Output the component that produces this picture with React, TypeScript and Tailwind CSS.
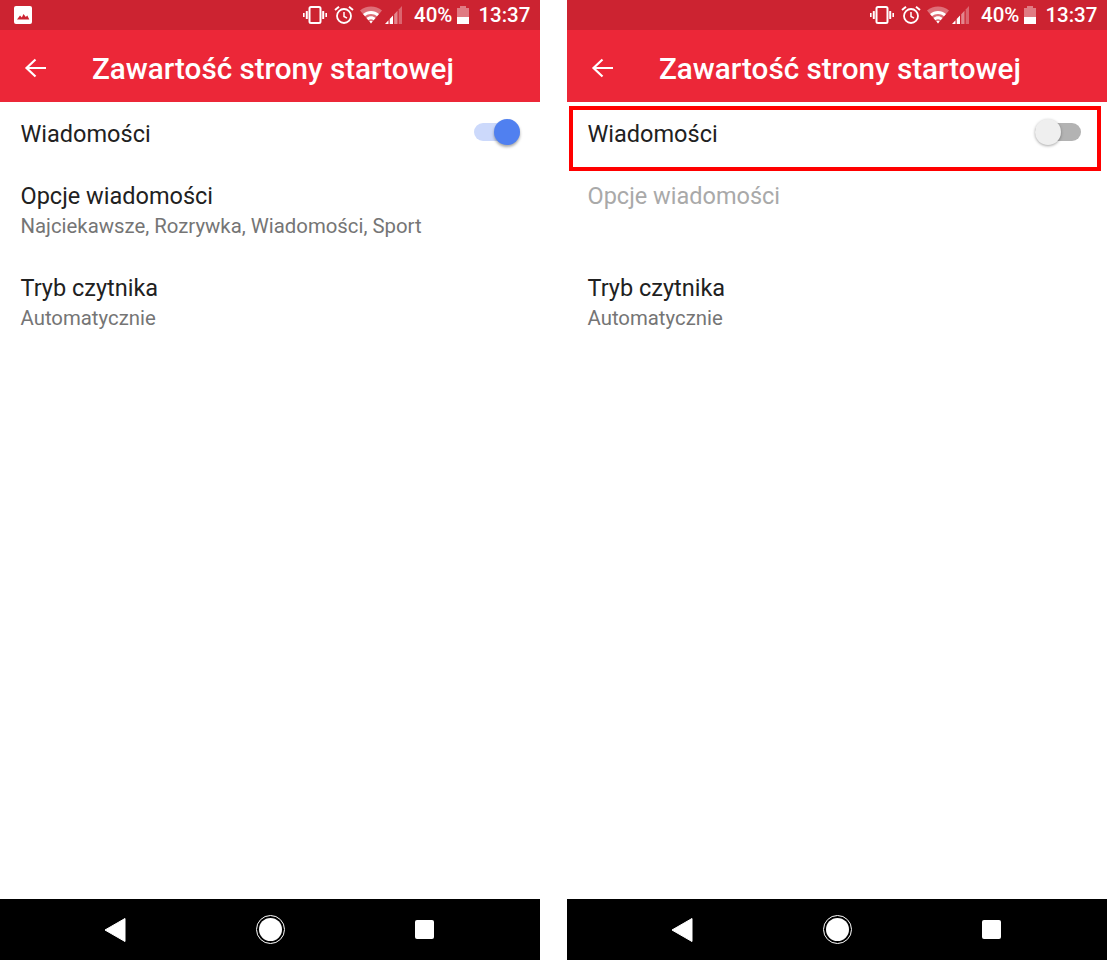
import React from "react";

function StatusIcons() {
  return (
    <div className="flex items-center h-full">
      <svg width="24" height="20" viewBox="0 0 24 20" className="ml-[303px]">
        <rect x="6.5" y="2" width="11" height="16" rx="1.5" fill="none" stroke="#fff" strokeWidth="2" />
        <rect x="2.8" y="6" width="2" height="8" rx="0.5" fill="#fff" />
        <rect x="19.2" y="6" width="2" height="8" rx="0.5" fill="#fff" />
        <rect x="0" y="8" width="1.6" height="4" fill="#fff" />
        <rect x="22.4" y="8" width="1.6" height="4" fill="#fff" />
      </svg>
      <svg width="20" height="20" viewBox="0 0 20 20" className="ml-[7px]">
        <circle cx="10" cy="11" r="7" fill="none" stroke="#fff" strokeWidth="1.8" />
        <path d="M10 7v4.5l3 1.7" fill="none" stroke="#fff" strokeWidth="1.5" />
        <path d="M1 5l4-3.2M19 5l-4-3.2" stroke="#fff" strokeWidth="2" />
      </svg>
      <svg width="22" height="18" viewBox="0 0 22 18" className="ml-[6px]">
        <path d="M0 4.5C6-1 16-1 22 4.5L11 17.5Z" fill="#fff" fillOpacity="0.35" />
        <path d="M3 8C7.5 4 14.5 4 19 8l-2 2.2C13.5 7.2 8.5 7.2 5 10.2Z" fill="#fff" />
        <path d="M6.5 12c2.6-2.2 6.400-2.200 9 0l-1.900 2.200c-1.500-1.200-3.700-1.200-5.200 0Z" fill="#fff" />
        <path d="M9.400 15.200c1-.7 2.200-.7 3.200 0L11 17.500Z" fill="#fff" />
      </svg>
      <svg width="18" height="18" viewBox="0 0 18 18" className="ml-[3px]">
        <path d="M0 18L3.500 14.300V18Z" fill="#fff" />
        <path d="M4.700 13V18H8V9.600Z" fill="#fff" />
        <path d="M9.200 8.300V18H12.500V4.800Z" fill="#fff" fillOpacity="0.45" />
        <path d="M13.700 3.500V18H17V0Z" fill="#fff" fillOpacity="0.3" />
      </svg>
      <span className="ml-[11px] text-[20.5px] font-medium text-white leading-none">40%</span>
      <div className="ml-[5px] w-[12px] h-[18px] flex flex-col">
        <div className="mx-auto w-[6px] h-[2px] bg-white/40" />
        <div className="h-[9px] bg-white/40" />
        <div className="h-[7px] bg-white" />
      </div>
      <span className="ml-[9px] text-[20.5px] font-medium text-white leading-none">13:37</span>
    </div>
  );
}

function Row({ title, sub, disabled, h, children }: { title: string; sub?: string; disabled?: boolean; h: string; children?: React.ReactNode }) {
  return (
    <div className={`flex items-start justify-between pl-[20.5px] pr-[20px] ${h}`}>
      <div>
        <div className={`text-[23.5px] leading-[32px] ${disabled ? "text-[#a9a9a9]" : "text-[#212121]"}`}>{title}</div>
        {sub && <div className="text-[20.35px] leading-[28px] text-[#757575]">{sub}</div>}
      </div>
      {children}
    </div>
  );
}

function Panel({ on }: { on: boolean }) {
  return (
    <div className="relative flex h-full w-[540px] flex-col bg-white">
      <div className="relative h-[30px] bg-[#cc2331]">
        {on && (
          <svg width="18" height="18" viewBox="0 0 18 18" className="absolute left-[14px] top-[6px]">
            <rect width="18" height="18" rx="2" fill="#fff" />
            <path d="M3 13.500l3-4 1.800 2 1.700-3.500 2.300 3 1.500-1.500 2 4Z" fill="#cc2331" />
          </svg>
        )}
        <StatusIcons />
      </div>
      <div className="flex h-[72px] items-center bg-[#ec2738] pt-[4px]">
        <svg width="24" height="24" viewBox="0 0 24 24" className="ml-[23px]">
          <path d="M23 12H4.500M12.500 3.500L3.500 12l9 8.500" fill="none" stroke="#fff" strokeWidth="2.200" />
        </svg>
        <span className="ml-[45px] mt-[2px] text-[29.65px] font-medium leading-none text-white">Zawartość strony startowej</span>
      </div>
      <div className="flex-1 pt-[16px]">
        <Row title="Wiadomości" h="h-[62px]">
          {on ? (
            <div className="relative mt-[5px] h-[18px] w-[46px] rounded-full bg-[#ccd9fb]">
              <div className="absolute -top-[4px] right-0 h-[26px] w-[26px] rounded-full bg-[#5080f0] shadow-[0_2px_3px_rgba(0,0,0,0.35)]" />
            </div>
          ) : (
            <div className="relative mr-[6px] mt-[5px] h-[18px] w-[46px] rounded-full bg-[#b3b3b3]">
              <div className="absolute -top-[4px] left-0 h-[26px] w-[26px] rounded-full bg-[#efefef] shadow-[0_1px_3px_rgba(0,0,0,0.35)]" />
            </div>
          )}
        </Row>
        <Row title="Opcje wiadomości" sub={on ? "Najciekawsze, Rozrywka, Wiadomości, Sport" : undefined} disabled={!on} h="h-[92px]" />
        <Row title="Tryb czytnika" sub="Automatycznie" h="h-[92px]" />
      </div>
      <div className="flex h-[61px] items-center bg-black">
        <svg width="22" height="26" viewBox="0 0 22 26" className="ml-[104px]">
          <path d="M21 1.500V24.500L1 13Z" fill="#fff" stroke="#fff" strokeWidth="1" strokeLinejoin="round" />
        </svg>
        <div className="ml-[129.5px] flex h-[29px] w-[29px] items-center justify-center rounded-full border border-white">
          <div className="h-[23px] w-[23px] rounded-full bg-white" />
        </div>
        <div className="ml-[130.5px] h-[19px] w-[19px] rounded-[2px] bg-white" />
      </div>
      {!on && <div className="pointer-events-none absolute left-[2px] top-[106px] h-[65px] w-[532px] border-4 border-[#ff0000]" />}
    </div>
  );
}

export default function App() {
  return (
    <div className="flex h-[960px] w-[1107px] justify-between overflow-hidden bg-white font-['Roboto',sans-serif]">
      <Panel on={true} />
      <Panel on={false} />
    </div>
  );
}
